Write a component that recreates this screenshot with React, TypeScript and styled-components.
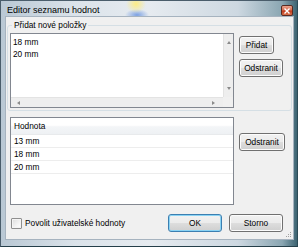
import React from "react";
import styled, { createGlobalStyle } from "styled-components";

const GlobalStyle = createGlobalStyle`
  html, body { margin: 0; padding: 0; width: 298px; height: 247px; overflow: hidden; background: #3b5f6c; }
  #root { width: 298px; height: 247px; }
  * { box-sizing: border-box; }
`;

const FONT = `"Liberation Sans", Arial, sans-serif`;

const Window = styled.div`
  width: 298px;
  height: 247px;
  display: flex;
  flex-direction: column;
  border: 1px solid #4a5d6b;
  border-right-color: #2c4b57;
  border-bottom-color: #253f4a;
  background:
    radial-gradient(ellipse 10px 9px at 135px 3px, rgba(255, 236, 120, 0.9), rgba(255, 236, 120, 0) 100%),
    radial-gradient(ellipse 12px 6px at 136px 14px, rgba(80, 130, 220, 0.7), rgba(80, 130, 220, 0) 100%),
    linear-gradient(to right, #b9c8d4 0%, #dbe3ea 25%, #e6ebf0 50%, #cdd8e1 80%, #8aa6b2 95%, #3d6472 100%);
  font-family: ${FONT};
  color: #000;
`;

const TitleBar = styled.div`
  height: 15px;
  display: flex;
  align-items: center;
  justify-content: space-between;
  padding: 0 4px 0 6px;
`;

const Title = styled.span`
  font-size: 9px;
  line-height: 15px;
  color: #000;
  padding-top: 3px;
`;

const CloseButton = styled.div`
  width: 12px;
  height: 11px;
  margin-top: 4px;
  border: 1px solid #5a2a20;
  border-radius: 2px;
  background: linear-gradient(#eaa48e 0%, #d66c4f 45%, #bf3a1c 55%, #d8704a 100%);
  display: flex;
  align-items: center;
  justify-content: center;
`;

const Client = styled.div`
  flex: 1;
  margin: 0 3px 6px 4px;
  background: #f0f0f0;
  border: 1px solid #a6b3bf;
  display: flex;
  flex-direction: column;
  position: relative;
  font-size: 8.3px;
`;

const GroupBox = styled.div`
  position: relative;
  margin: 8px 1px 0 1px;
  height: 86px;
  border: 1px solid #d5dfe5;
  border-radius: 3px;
  padding: 7px 0 0 2px;
  display: flex;
`;

const Legend = styled.span`
  position: absolute;
  top: -7px;
  left: 4px;
  padding: 0 2px;
  background: #f0f0f0;
  line-height: 12px;
`;

const ListBox = styled.div`
  width: 224px;
  height: 75px;
  border: 1px solid #828790;
  background: #fff;
  display: grid;
  grid-template-columns: 1fr 10px;
  grid-template-rows: 1fr 10px;
`;

const ListItems = styled.div`
  padding: 2px 0 0 2px;
  line-height: 12px;
`;

const VScroll = styled.div`
  background: #eeeeee;
  border-left: 1px solid #e3e3e3;
  display: flex;
  flex-direction: column;
  justify-content: space-between;
  align-items: center;
  padding: 7px 0 7px;
`;

const HScroll = styled.div`
  background: #eeeeee;
  border-top: 1px solid #e3e3e3;
  display: flex;
  justify-content: space-between;
  align-items: center;
  padding: 0 8px 0 6px;
`;

const Corner = styled.div`
  background: #f0f0f0;
`;

const Arrow = styled.div<{ dir: "up" | "down" | "left" | "right" }>`
  width: 0;
  height: 0;
  ${(p) =>
    p.dir === "up"
      ? "border-left: 2.5px solid transparent; border-right: 2.5px solid transparent; border-bottom: 3px solid #8a8a8a;"
      : p.dir === "down"
      ? "border-left: 2.5px solid transparent; border-right: 2.5px solid transparent; border-top: 3px solid #8a8a8a;"
      : p.dir === "left"
      ? "border-top: 2.5px solid transparent; border-bottom: 2.5px solid transparent; border-right: 3px solid #8a8a8a;"
      : "border-top: 2.5px solid transparent; border-bottom: 2.5px solid transparent; border-left: 3px solid #8a8a8a;"}
`;

const ButtonColumn = styled.div`
  display: flex;
  flex-direction: column;
  align-items: flex-start;
  gap: 5px;
  margin-left: 5px;
  padding-top: 3px;
`;

const Button = styled.button<{ w: number; isDefault?: boolean }>`
  width: ${(p) => p.w}px;
  height: 18px;
  padding: 0;
  font-family: ${FONT};
  font-size: 8.3px;
  color: #000;
  border: 1px solid ${(p) => (p.isDefault ? "#3c7fb1" : "#707070")};
  border-radius: 3px;
  background: linear-gradient(#f2f2f2 0%, #ebebeb 48%, #dddddd 52%, #cfcfcf 100%);
  box-shadow: inset 0 0 0 1px ${(p) => (p.isDefault ? "#8ad3f4" : "#fcfcfc")};
  line-height: 16px;
`;

const ListSection = styled.div`
  display: flex;
  margin-top: 6px;
  padding-left: 4px;
`;

const ListView = styled.div`
  width: 224px;
  height: 88px;
  border: 1px solid #828790;
  background: #fff;
`;

const Header = styled.div`
  height: 17px;
  line-height: 16px;
  padding-left: 3px;
  background: linear-gradient(#ffffff 0%, #ffffff 45%, #f3f5f7 55%, #eef1f4 100%);
  border-bottom: 1px solid #e8eaec;
`;

const Row = styled.div`
  height: 13px;
  line-height: 12px;
  padding-left: 3px;
  border-bottom: 1px solid #ededed;
`;

const ListButtonColumn = styled.div`
  margin-left: 5px;
  padding-top: 16px;
`;

const Footer = styled.div`
  display: flex;
  align-items: center;
  margin-top: 9px;
  padding: 0 0 0 5px;
`;

const CheckLabel = styled.label`
  display: flex;
  align-items: center;
  gap: 3px;
  flex: 1;
`;

const CheckBox = styled.span`
  width: 11px;
  height: 11px;
  border: 1px solid #8f8f8f;
  border-radius: 1px;
  background: linear-gradient(135deg, #dcdcdc 0%, #f4f4f4 60%, #ffffff 100%);
  box-shadow: inset 0 0 0 1px #f4f4f4;
`;

const FooterButtons = styled.div`
  display: flex;
  gap: 7px;
  margin-right: 10px;
`;

const Grip = styled.svg`
  position: absolute;
  right: 1px;
  bottom: 1px;
`;

export default function App() {
  return (
    <>
      <GlobalStyle />
      <Window>
        <TitleBar>
          <Title>Editor seznamu hodnot</Title>
          <CloseButton>
            <svg width="6" height="6" viewBox="0 0 6 6">
              <path d="M0.5 0.5 L5.5 5.5 M5.5 0.5 L0.5 5.5" stroke="#fff" strokeWidth="1.4" />
            </svg>
          </CloseButton>
        </TitleBar>
        <Client>
          <GroupBox>
            <Legend>Přidat nové položky</Legend>
            <ListBox>
              <ListItems>
                <div>18 mm</div>
                <div>20 mm</div>
              </ListItems>
              <VScroll>
                <Arrow dir="up" />
                <Arrow dir="down" />
              </VScroll>
              <HScroll>
                <Arrow dir="left" />
                <Arrow dir="right" />
              </HScroll>
              <Corner />
            </ListBox>
            <ButtonColumn>
              <Button w={35}>Přidat</Button>
              <Button w={44}>Odstranit</Button>
            </ButtonColumn>
          </GroupBox>
          <ListSection>
            <ListView>
              <Header>Hodnota</Header>
              <Row>13 mm</Row>
              <Row>18 mm</Row>
              <Row>20 mm</Row>
            </ListView>
            <ListButtonColumn>
              <Button w={46}>Odstranit</Button>
            </ListButtonColumn>
          </ListSection>
          <Footer>
            <CheckLabel>
              <CheckBox />
              <span>Povolit uživatelské hodnoty</span>
            </CheckLabel>
            <FooterButtons>
              <Button w={54} isDefault>OK</Button>
              <Button w={54}>Storno</Button>
            </FooterButtons>
          </Footer>
          <Grip width="7" height="7" viewBox="0 0 7 7">
            <rect x="5" y="1" width="1" height="1" fill="#a0a0a0" />
            <rect x="3" y="3" width="1" height="1" fill="#a0a0a0" />
            <rect x="5" y="3" width="1" height="1" fill="#a0a0a0" />
            <rect x="1" y="5" width="1" height="1" fill="#a0a0a0" />
            <rect x="3" y="5" width="1" height="1" fill="#a0a0a0" />
            <rect x="5" y="5" width="1" height="1" fill="#a0a0a0" />
          </Grip>
        </Client>
      </Window>
    </>
  );
}
